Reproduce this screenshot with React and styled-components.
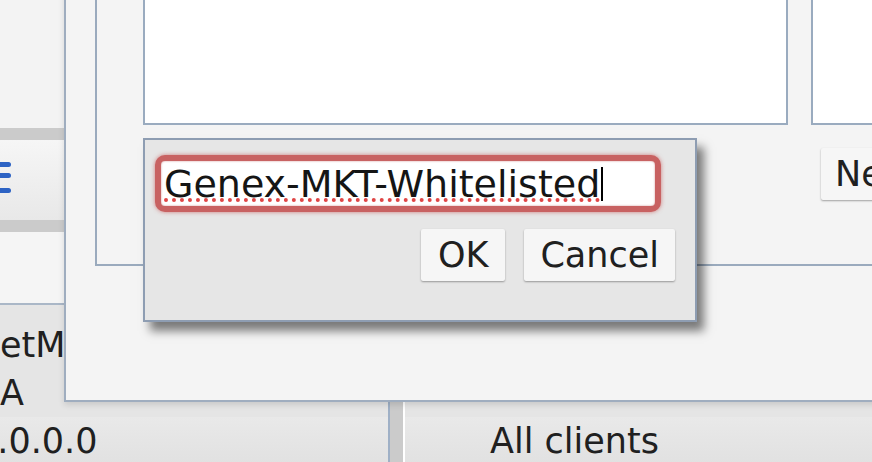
import React from 'react'
import styled, {createGlobalStyle} from 'styled-components'

const Global = createGlobalStyle`
  html, body {
    margin: 0;
    padding: 0;
    background: #f2f2f2;
  }
  body {
    font-family: "DejaVu Sans", Verdana, sans-serif;
  }
`

const Screen = styled.div`
  position: relative;
  width: 872px;
  height: 462px;
  overflow: hidden;
  background: #f2f2f2;
  display: flex;
  flex-direction: column;
  font-size: 35px;
  color: #202020;
`

const Sidebar = styled.div`
  height: 303px;
  display: flex;
  flex-direction: column;
  border-bottom: 2px solid #aab7c7;
  background: #f4f4f4;
`

const Blank = styled.div`
  height: ${p => p.h}px;
  background: ${p => p.bg || '#f3f3f3'};
`

const Divider = styled.div`
  height: 12px;
  background: #cbcbcb;
`

const ToolArea = styled.div`
  height: 80px;
  background: linear-gradient(#f6f6f6, #e8e8e8);
  display: flex;
  align-items: flex-start;
  padding-top: 19px;
  box-sizing: border-box;
`

const Table = styled.div`
  flex: 1;
  background: #e5e5e5;
  padding-top: 16px;
  display: flex;
  flex-direction: column;
`

const Row = styled.div`
  height: 48px;
  line-height: 48px;
  display: flex;
  white-space: nowrap;
  background: ${p => p.last ? 'linear-gradient(#e9e9e9, #e1e1e1)' : 'transparent'};
`

const Cell = styled.div`
  width: ${p => p.w ? p.w + 'px' : 'auto'};
  flex: ${p => p.w ? 'none' : 1};
  overflow: hidden;
  padding-left: ${p => p.pad || 0}px;
  box-sizing: border-box;
`

const Shifted = styled.span`
  display: inline-block;
  margin-left: ${p => p.shift}px;
`

const ColSplit = styled.div`
  width: 17px;
  flex: none;
  background: #cbcbcb;
  border-left: 2px solid #9fb0c6;
  border-right: 2px solid #ffffff;
  box-sizing: border-box;
`

const Window = styled.div`
  position: absolute;
  left: 64px;
  top: -30px;
  width: 900px;
  height: 432px;
  box-sizing: border-box;
  background: #f4f4f4;
  border: 2px solid #9fadbf;
  box-shadow: 0 3px 6px rgba(0, 0, 0, 0.12);
  padding-left: 29px;
`

const InnerPanel = styled.div`
  height: 294px;
  box-sizing: border-box;
  border-left: 2px solid #9aaabd;
  border-bottom: 2px solid #9aaabd;
  padding-left: 46px;
  display: flex;
  flex-direction: column;
`

const Boxes = styled.div`
  display: flex;
  gap: 23px;
  height: 153px;
`

const WhiteBox = styled.div`
  width: ${p => p.w}px;
  flex: none;
  height: 100%;
  box-sizing: border-box;
  background: #ffffff;
  border: 2px solid #9aabbf;
`

const SideButtons = styled.div`
  display: flex;
  padding-left: 678px;
  margin-top: 23px;
`

const Button = styled.button`
  height: 52px;
  flex: none;
  padding: 0 ${p => p.pad || 16}px;
  border: none;
  border-radius: 2px;
  background: #f6f6f6;
  box-shadow: 0 1px 2px rgba(0, 0, 0, 0.35);
  font-family: "DejaVu Sans", Verdana, sans-serif;
  font-size: 35px;
  color: #202020;
  line-height: 52px;
  white-space: nowrap;
`

const Dialog = styled.div`
  position: absolute;
  left: 143px;
  top: 138px;
  width: 554px;
  height: 184px;
  box-sizing: border-box;
  background: #e6e6e6;
  border: 2px solid #8e9db2;
  box-shadow: 7px 9px 9px rgba(0, 0, 0, 0.5);
  padding: 15px 20px 0 10px;
  display: flex;
  flex-direction: column;
`

const FocusRing = styled.div`
  width: 506px;
  height: 57px;
  box-sizing: border-box;
  border: 6px solid #c86262;
  border-radius: 10px;
  box-shadow: 0 0 4px rgba(200, 80, 80, 0.7), inset 0 0 2px rgba(170, 60, 60, 0.6);
  background: #ffffff;
  display: flex;
  align-items: center;
  padding-left: 3px;
  overflow: hidden;
`

const InputText = styled.span`
  font-size: 38px;
  color: #151515;
  white-space: nowrap;
  text-decoration: underline dotted #e04646;
  text-decoration-thickness: 4px;
  text-underline-offset: 2px;
`

const Caret = styled.span`
  display: inline-block;
  width: 2px;
  height: 34px;
  background: #000;
  margin-left: 1px;
`

const DialogButtons = styled.div`
  display: flex;
  justify-content: flex-end;
  gap: 19px;
  margin-top: 17px;
`

function MenuIcon() {
  return (
    <svg width="14" height="34" viewBox="0 0 14 34">
      <rect x="-6" y="3" width="17" height="5" rx="2.5" fill="#2d63c4" />
      <rect x="-6" y="14" width="17" height="5" rx="2.5" fill="#2d63c4" />
      <rect x="-6" y="29" width="17" height="5" rx="2.5" fill="#2d63c4" />
    </svg>
  )
}

export default function App() {
  return (
    <>
      <Global />
      <Screen>
        <Sidebar>
          <Blank h={128} bg="#f3f3f3" />
          <Divider />
          <ToolArea>
            <MenuIcon />
          </ToolArea>
          <Divider />
          <Blank h={71} bg="#f5f5f5" />
        </Sidebar>
        <Table>
          <Row>
            <Cell w={388}>etMask</Cell>
            <ColSplit />
            <Cell />
          </Row>
          <Row>
            <Cell w={388}>A</Cell>
            <ColSplit />
            <Cell />
          </Row>
          <Row last>
            <Cell w={388}><Shifted shift={-25}>0.0.0.0</Shifted></Cell>
            <ColSplit />
            <Cell pad={85}>All clients</Cell>
          </Row>
        </Table>

        <Window>
          <InnerPanel>
            <Boxes>
              <WhiteBox w={645} />
              <WhiteBox w={200} />
            </Boxes>
            <SideButtons>
              <Button pad={14}>New</Button>
            </SideButtons>
          </InnerPanel>
        </Window>

        <Dialog>
          <FocusRing>
            <InputText>Genex-MKT-Whitelisted</InputText>
            <Caret />
          </FocusRing>
          <DialogButtons>
            <Button pad={17}>OK</Button>
            <Button pad={16}>Cancel</Button>
          </DialogButtons>
        </Dialog>
      </Screen>
    </>
  )
}
